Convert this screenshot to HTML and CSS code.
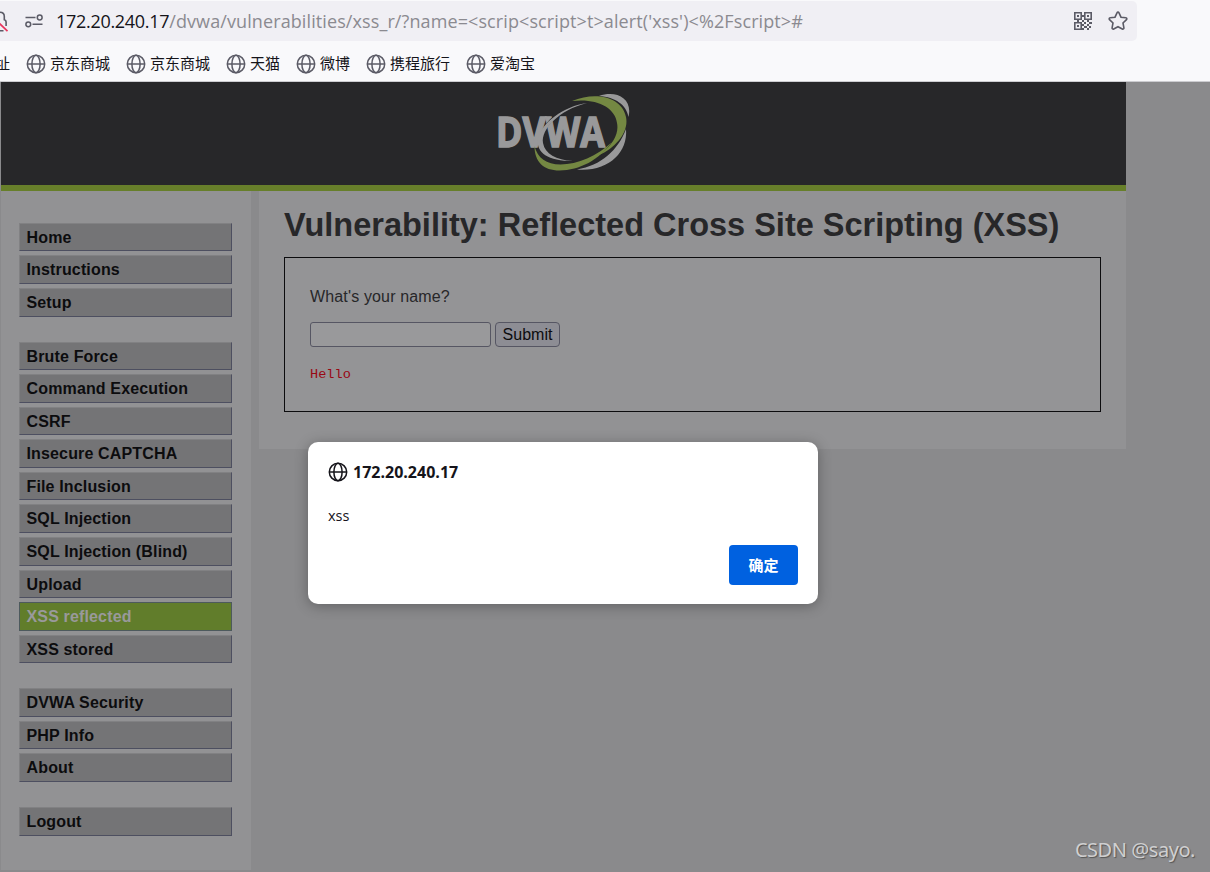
FILE: index.html
```html
<!DOCTYPE html>
<html lang="zh-CN">
<head>
    <meta charset="UTF-8">
    <title>Vulnerability: Reflected Cross Site Scripting (XSS)</title>
    <link rel="stylesheet" href="styles.css">
</head>
<body>
    <!-- Shared icons -->
    <svg class="hidden">
        <symbol id="globe" viewBox="0 0 20 20">
            <g fill="none" stroke="currentColor" stroke-width="1.5">
                <circle cx="10" cy="10" r="8.7"/>
                <ellipse cx="10" cy="10" rx="4.1" ry="8.7"/>
                <path d="M1.3 10h17.4"/>
            </g>
        </symbol>
    </svg>

    <div class="browser">
        <div class="url-bar">
            <svg class="lock-icon" width="9" height="24" viewBox="0 0 9 24">
                <path d="M0 3.2c3 0 4.3 1.7 4.3 4.3v3.2c1.2.3 1.8 1 1.8 2.4V17M0 21.8h3.5" fill="none" stroke="#5b5b66" stroke-width="1.6"/>
                <path d="M-1 14l8.5 8.2" stroke="#e8365d" stroke-width="1.7"/>
            </svg>
            <svg class="settings-icon" width="18" height="14" viewBox="0 0 18 14" fill="none" stroke="#5b5b66" stroke-width="1.5">
                <circle cx="14.7" cy="3.5" r="2.4"/>
                <circle cx="3.3" cy="10.3" r="2.4"/>
                <path d="M.5 3.5h10M7.5 10.3h10"/>
            </svg>
            <span class="url"><span class="host">172.20.240.17</span>/dvwa/vulnerabilities/xss_r/?name=&lt;scrip&lt;script&gt;t&gt;alert('xss')&lt;%2Fscript&gt;#</span>
            <svg class="qr-icon" width="18" height="18" viewBox="0 0 18 18">
                <g fill="none" stroke="#5b5b66" stroke-width="1.6">
                    <path d="M.8.8h6.4v6.4H.8zM10.8.8h6.4v6.4h-6.4zM.8 10.8h6.4v6.4H.8z"/>
                </g>
                <path fill="#5b5b66" d="M3 3h2v2H3zM13 3h2v2h-2zM3 13h2v2H3zM8 3h2v2H8zM3 8h2v2H3zM8 8h2v2H8zM13 8h2v2h-2zM10 10h2v2h-2zM15 10h3v2h-3zM8 12h2v2H8zM13 12h2v2h-2zM10 14h3v2h-3zM15 14h2v2h-2zM8 16h2v2H8zM13 16h2v2h-2z"/>
            </svg>
            <svg class="star-icon" width="20" height="20" viewBox="0 0 20 20">
                <path d="M10 1.1c.5 0 .8.3 1 .7l2 4.4 4.8.6c1 .1 1.4 1.2.7 1.9l-3.5 3.3.9 4.8c.2 1-.8 1.7-1.6 1.2L10 15.7 5.7 18c-.8.5-1.8-.2-1.6-1.2l.9-4.8-3.5-3.3c-.7-.7-.3-1.8.7-1.9l4.8-.6 2-4.4c.2-.4.5-.7 1-.7z" fill="none" stroke="#5b5b66" stroke-width="1.6"/>
            </svg>
        </div>
        <div class="bookmarks">
            <span class="cut">址</span>
            <span class="bookmark"><svg><use href="#globe"/></svg><span>京东商城</span></span>
            <span class="bookmark"><svg><use href="#globe"/></svg><span>京东商城</span></span>
            <span class="bookmark"><svg><use href="#globe"/></svg><span>天猫</span></span>
            <span class="bookmark"><svg><use href="#globe"/></svg><span>微博</span></span>
            <span class="bookmark"><svg><use href="#globe"/></svg><span>携程旅行</span></span>
            <span class="bookmark"><svg><use href="#globe"/></svg><span>爱淘宝</span></span>
        </div>
    </div>

    <div class="page">
        <div class="container">
            <div class="header">
                <svg class="logo" width="136" height="80" viewBox="0 0 136 80">
                    <text x="1" y="53.5" class="logo-text" textLength="109" lengthAdjust="spacingAndGlyphs">DVWA</text>
                    <path d="M92 10C66 14 49 30 46 45" class="swirl-gap"/>
                    <path d="M92 10C69 13 46 30 43 46c-2 14 10 22 35 22-17-1-28-7-30-18-2-14 16-33 44-40z" class="swirl-gray"/>
                    <path d="M104 3c17-6 34 2 29.500 21-2-12-13-20-29.500-21z" class="swirl-gray"/>
                    <path d="M131 36c2 24-18 43-49 40.500 24-4 41-19 49-40.500z" class="swirl-gray"/>
                    <path d="M77 8c24-10 50-4 54 16 3 14-9 30-27 38 15-11 20-22 18-32-2-16-21-25-45-22z" class="swirl-green"/>
                    <path d="M39.500 53c0 16 9 24.500 25 24.500 20 0 40-11 52-28-14 13-34 22-51 22-14 0-23-6.500-26-18.500z" class="swirl-green"/>
                </svg>
            </div>
            <div class="columns">
                <div class="menu">
                    <ul>
                        <li>Home</li>
                        <li>Instructions</li>
                        <li>Setup</li>
                    </ul>
                    <ul>
                        <li>Brute Force</li>
                        <li>Command Execution</li>
                        <li>CSRF</li>
                        <li>Insecure CAPTCHA</li>
                        <li>File Inclusion</li>
                        <li>SQL Injection</li>
                        <li>SQL Injection (Blind)</li>
                        <li>Upload</li>
                        <li class="selected">XSS reflected</li>
                        <li>XSS stored</li>
                    </ul>
                    <ul>
                        <li>DVWA Security</li>
                        <li>PHP Info</li>
                        <li>About</li>
                    </ul>
                    <ul>
                        <li>Logout</li>
                    </ul>
                </div>
                <div class="main">
                    <h1>Vulnerability: Reflected Cross Site Scripting (XSS)</h1>
                    <div class="vulnerable">
                        <p>What's your name?</p>
                        <form class="name-form">
                            <input type="text" name="name">
                            <button type="button">Submit</button>
                        </form>
                        <pre>Hello </pre>
                    </div>
                </div>
            </div>
        </div>
    </div>

    <div class="dialog">
        <div class="dialog-title"><svg><use href="#globe"/></svg><span>172.20.240.17</span></div>
        <div class="dialog-text">xss</div>
        <button class="ok" type="button">确定</button>
    </div>

    <div class="watermark">CSDN @sayo.</div>
</body>
</html>
```
FILE: styles.css
```css
* {
    box-sizing: border-box;
}

body {
    margin: 0;
    height: 872px;
    overflow: hidden;
    display: flex;
    flex-direction: column;
    background-color: #8a8a8c;
    font-family: "Liberation Sans", Arial, sans-serif;
}

.hidden {
    display: none;
}

/* Browser toolbar */
.browser {
    height: 82px;
    padding-top: 1px;
    background-color: #f9f9fb;
    border-bottom: 1px solid #ccccd0;
}

.url-bar {
    display: flex;
    align-items: center;
    width: 1137px;
    height: 40px;
    padding-right: 9px;
    background-color: #f0eff4;
    border-radius: 0 5px 5px 0;
}

.settings-icon {
    margin-left: 16px;
}

.url {
    flex: 1;
    margin-left: 13px;
    color: #8b8a90;
    font-family: "Open Sans", "Noto Sans", sans-serif;
    font-size: 18px;
    letter-spacing: 0.1px;
    white-space: nowrap;
}

.host {
    color: #15141a;
    letter-spacing: -0.3px;
}

.qr-icon {
    margin-right: 16px;
}

.bookmarks {
    display: flex;
    align-items: center;
    height: 40px;
    padding-top: 5px;
    gap: 16px;
    color: #15141a;
    font-family: "Noto Sans CJK SC", sans-serif;
    font-size: 15px;
    line-height: 20px;
}

/* Bookmark scrolled partly past the left edge */
.cut {
    width: 15px;
    margin: -2px 0 0 -5px;
}

.bookmark {
    display: flex;
    align-items: center;
    gap: 4px;
    white-space: nowrap;
}

.bookmark span {
    padding-bottom: 2px;
}

.bookmark svg {
    width: 20px;
    height: 20px;
    color: #5b5b66;
}

/* DVWA page */
.page {
    flex: 1;
    padding-left: 1px;
}

.container {
    width: 1125px;
}

.header {
    height: 109px;
    padding: 11px 2px 0 0;
    text-align: center;
    background-color: #272729;
    border-bottom: 6px solid #677f2a;
}

.logo-text {
    font-family: "Open Sans", sans-serif;
    font-size: 41px;
    font-weight: bold;
    fill: #99999a;
    stroke: #99999a;
    stroke-width: 1.6px;
}

.swirl-gap {
    fill: none;
    stroke: #272729;
    stroke-width: 3px;
}

.swirl-gray {
    fill: #99999a;
}

.swirl-green {
    fill: #748842;
}

.columns {
    display: flex;
    align-items: flex-start;
    gap: 8px;
}

.menu {
    width: 250px;
    height: 679px;
    padding: 31.9px 19px 0 18px;
    background-color: #929294;
}

.menu ul {
    margin: 0 0 25.2px;
    padding: 0;
    list-style: none;
}

.menu li {
    height: 28.55px;
    margin-bottom: 4px;
    padding-left: 6.5px;
    background-color: #747476;
    border: 1px solid #4d4f60;
    border-top-color: #818183;
    border-left-color: #818183;
    color: #0c0c0e;
    font-size: 16px;
    font-weight: bold;
    letter-spacing: 0.15px;
    line-height: 27px;
}

.menu li:last-child {
    margin-bottom: 0;
}

.menu li.selected {
    background-color: #617d2b;
    border-color: #4d5a5d;
    color: #99999b;
}

.main {
    width: 867px;
    height: 258px;
    padding: 15px 25px 0;
    background-color: #929294;
}

.main h1 {
    margin: 0 0 12px;
    color: #272729;
    font-size: 32.5px;
    line-height: 39px;
    white-space: nowrap;
}

.vulnerable {
    height: 155px;
    padding: 29px 25px 0;
    background-color: #949496;
    border: 1px solid #0c0c0e;
    color: #272729;
    font-size: 16px;
}

.vulnerable p {
    margin: 0 0 16px;
    letter-spacing: 0.15px;
    line-height: 19px;
}

.name-form {
    display: flex;
    gap: 4px;
}

.name-form input {
    width: 181px;
    height: 25px;
    background-color: #99999b;
    border: 1px solid #565663;
    border-radius: 3px;
}

.name-form button {
    width: 65px;
    height: 25px;
    padding: 0;
    background-color: #8d8d94;
    border: 1px solid #565663;
    border-radius: 4px;
    color: #0c0c0e;
    font-family: inherit;
    font-size: 16px;
}

.vulnerable pre {
    margin: 19px 0 0;
    color: #990814;
    font-family: "Liberation Mono", monospace;
    font-size: 13.6px;
    line-height: 18px;
}

/* Alert box */
.dialog {
    position: absolute;
    left: 308px;
    top: 442px;
    display: flex;
    flex-direction: column;
    width: 510px;
    height: 162px;
    padding: 20px;
    background-color: #fff;
    border-radius: 10px;
    box-shadow: 0 2px 14px rgba(0, 0, 0, 0.3);
    color: #15141a;
    font-family: "Open Sans", "Noto Sans", sans-serif;
}

.dialog-title {
    display: flex;
    align-items: center;
    gap: 5px;
    height: 20px;
    font-size: 16px;
    font-weight: bold;
}

.dialog-title svg {
    width: 20px;
    height: 20px;
}

.dialog-text {
    margin-top: 23px;
    font-size: 14.5px;
    line-height: 22px;
}

.ok {
    flex-shrink: 0;
    align-self: flex-end;
    width: 69px;
    height: 40px;
    margin-top: 18px;
    padding: 0 0 2px;
    background-color: #0061e0;
    border: none;
    border-radius: 4px;
    color: #fff;
    font-family: "Noto Sans CJK SC", sans-serif;
    font-size: 15px;
    font-weight: bold;
}

.watermark {
    position: absolute;
    right: 15px;
    bottom: 9px;
    color: #cfcfd0;
    font-family: "Noto Sans", sans-serif;
    font-size: 20px;
    letter-spacing: -0.45px;
    text-shadow: 1px 1px 1px #555;
}
```
